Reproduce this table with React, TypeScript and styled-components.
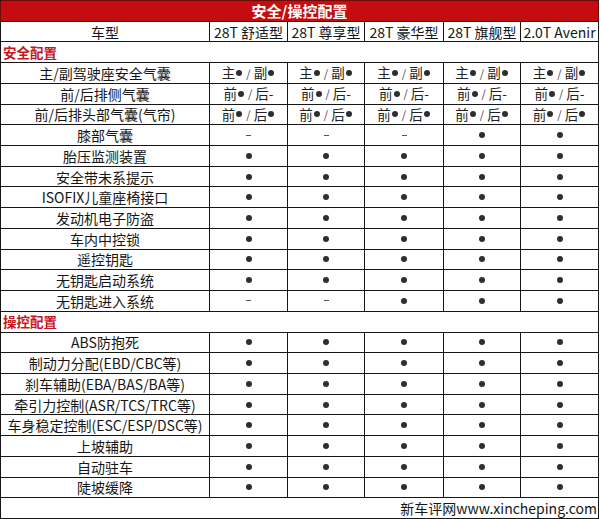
import styled, { createGlobalStyle } from "styled-components";

const GlobalStyle = createGlobalStyle`
  html, body {
    margin: 0;
    padding: 0;
    background: #ffffff;
  }
  body {
    font-family: "Noto Sans CJK SC", "Noto Sans", sans-serif;
    color: #151515;
  }
`;

const Sheet = styled.div`
  display: grid;
  grid-template-columns: 208px 77px 76px 78px 76px 77px;
  grid-template-rows: repeat(25, 1fr);
  gap: 1px;
  padding: 1px;
  width: 599px;
  height: 519px;
  box-sizing: border-box;
  background: #161616;
`;

const Title = styled.div`
  grid-column: 1 / -1;
  display: flex;
  align-items: center;
  justify-content: center;
  background: #c50d0f;
  box-shadow: 0 -1px 0 0 #6e0a0a, -1px 0 0 0 #6e0a0a, 1px 0 0 0 #6e0a0a;
  color: #ffffff;
  font-size: 15px;
  font-weight: 700;
  line-height: 1;
`;

const Cell = styled.div`
  display: flex;
  align-items: center;
  justify-content: center;
  background: #ffffff;
  font-size: 14px;
  line-height: 1;
  white-space: nowrap;
  overflow: hidden;
`;

const Section = styled.div`
  grid-column: 1 / -1;
  display: flex;
  align-items: center;
  padding-left: 2px;
  background: #ffffff;
  color: #c8161d;
  font-size: 13.5px;
  font-weight: 700;
  line-height: 1;
`;

const Footer = styled.div`
  grid-column: 1 / -1;
  display: flex;
  align-items: center;
  justify-content: flex-end;
  padding-right: 1px;
  background: #ffffff;
  font-size: 14px;
  line-height: 1;
`;

const Dot = styled.span`
  display: inline-block;
  width: 6px;
  height: 6px;
  border-radius: 50%;
  background: #2e2e2e;
  margin: 0 1px;
`;

const Dash = styled.span`
  display: inline-block;
  width: 5px;
  height: 1px;
  background: #555;
`;

const Pair = styled.span`
  display: inline-flex;
  align-items: center;
  font-size: 13.5px;
  color: #222;
`;

const Slash = styled.span`
  font-size: 11px;
  color: #444;
  margin: 0 3px;
`;

type Mark = "dot" | "dash" | "main" | "side" | "head";

const models = ["28T 舒适型", "28T 尊享型", "28T 豪华型", "28T 旗舰型", "2.0T Avenir"];

const all = (m: Mark): Mark[] => [m, m, m, m, m];

const safety: [string, Mark[]][] = [
  ["主/副驾驶座安全气囊", all("main")],
  ["前/后排侧气囊", all("side")],
  ["前/后排头部气囊(气帘)", all("head")],
  ["膝部气囊", ["dash", "dash", "dash", "dot", "dot"]],
  ["胎压监测装置", all("dot")],
  ["安全带未系提示", all("dot")],
  ["ISOFIX儿童座椅接口", all("dot")],
  ["发动机电子防盗", all("dot")],
  ["车内中控锁", all("dot")],
  ["遥控钥匙", all("dot")],
  ["无钥匙启动系统", all("dot")],
  ["无钥匙进入系统", ["dash", "dash", "dot", "dot", "dot"]],
];

const handling: [string, Mark[]][] = [
  ["ABS防抱死", all("dot")],
  ["制动力分配(EBD/CBC等)", all("dot")],
  ["刹车辅助(EBA/BAS/BA等)", all("dot")],
  ["牵引力控制(ASR/TCS/TRC等)", all("dot")],
  ["车身稳定控制(ESC/ESP/DSC等)", all("dot")],
  ["上坡辅助", all("dot")],
  ["自动驻车", all("dot")],
  ["陡坡缓降", all("dot")],
];

function Value({ mark }: { mark: Mark }) {
  if (mark === "dot") return <Dot />;
  if (mark === "dash") return <Dash />;
  const [a, b] = mark === "main" ? ["主", "副"] : ["前", "后"];
  return (
    <Pair>
      {a}
      <Dot />
      <Slash>/</Slash>
      {b}
      {mark === "side" ? "-" : <Dot />}
    </Pair>
  );
}

function Rows({ rows }: { rows: [string, Mark[]][] }) {
  return (
    <>
      {rows.map(([name, marks]) => (
        <>
          <Cell key={name}>{name}</Cell>
          {marks.map((m, i) => (
            <Cell key={name + i}>
              <Value mark={m} />
            </Cell>
          ))}
        </>
      ))}
    </>
  );
}

export default function App() {
  return (
    <>
      <GlobalStyle />
      <Sheet>
        <Title>安全/操控配置</Title>
        <Cell>车型</Cell>
        {models.map((m) => (
          <Cell key={m}>{m}</Cell>
        ))}
        <Section>安全配置</Section>
        <Rows rows={safety} />
        <Section>操控配置</Section>
        <Rows rows={handling} />
        <Footer>新车评网www.xincheping.com</Footer>
      </Sheet>
    </>
  );
}
